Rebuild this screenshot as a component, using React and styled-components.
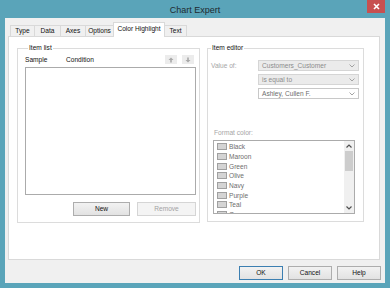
import React from 'react'
import styled, { createGlobalStyle, css } from 'styled-components'

const GlobalStyle = createGlobalStyle`
html, body {
  margin: 0;
  padding: 0;
}
body {
  font-family: "Liberation Sans", Arial, sans-serif;
  width: 390px;
  height: 288px;
  overflow: hidden;
}
* { box-sizing: border-box; }
`

const Window = styled.div`
width: 390px;
height: 288px;
background: #5aa4b9;
display: flex;
flex-direction: column;
`
const TitleBar = styled.div`
height: 18px;
display: grid;
grid-template-columns: 1fr auto 1fr;
align-items: start;
`
const Title = styled.div`
grid-column: 2;
font-size: 9px;
line-height: 16px;
padding-top: 2px;
color: #1f2a30;
`
const CloseBtn = styled.div`
grid-column: 3;
justify-self: end;
margin-right: 5px;
width: 18px;
height: 13px;
background: #c75050;
display: flex;
align-items: center;
justify-content: center;
`
const Client = styled.div`
flex: 1;
margin: 0 5px 5px;
background: #f0f0f0;
display: flex;
flex-direction: column;
padding: 4px 4px 0 3px;
`
const Tabs = styled.div`
display: flex;
align-items: flex-end;
height: 14px;
padding-left: 2px;
position: relative;
z-index: 1;
`
const Tab = styled.div`
width: ${p => p.w}px;
height: 11px;
margin-right: -1px;
border: 1px solid #d9d9d9;
border-bottom: none;
background: #f0f0f0;
font-size: 6.6px;
line-height: 10px;
text-align: center;
white-space: nowrap;
color: #111;
${p => p.active && css`
  height: 15px;
  margin-bottom: -1px;
  background: #fff;
  line-height: 12px;
`}
`
const Panel = styled.div`
height: 224px;
margin-right: 1px;
background: #fff;
border: 1px solid #d9d9d9;
display: flex;
gap: 7px;
padding: 7px 0 0 8px;
`
const Group = styled.fieldset`
margin: 0;
width: ${p => p.w}px;
height: ${p => p.h}px;
border: 1px solid #dcdcdc;
padding: ${p => p.pad};
min-width: 0;
display: flex;
flex-direction: column;
`
const Legend = styled.legend`
font-size: 6.6px;
line-height: 8px;
padding: 0 1px;
margin-left: 3px;
color: #111;
`
const HeaderRow = styled.div`
display: flex;
align-items: center;
height: 11px;
margin-top: 2px;
font-size: 6.6px;
color: #111;
`
const Col = styled.div`
width: ${p => p.w ? p.w + 'px' : 'auto'};
flex: ${p => p.w ? 'none' : 1};
`
const ArrowBtn = styled.div`
width: 12px;
height: 9px;
background: #ececec;
margin-left: 5px;
display: flex;
align-items: center;
justify-content: center;
`
const ListBox = styled.div`
height: ${p => p.h}px;
margin: ${p => p.m};
border: 1px solid #ababab;
background: #fff;
display: flex;
`
const ButtonRow = styled.div`
display: flex;
justify-content: flex-end;
gap: ${p => p.gap}px;
margin-top: ${p => p.mt}px;
margin-right: ${p => p.mr}px;
`
const Button = styled.div`
width: ${p => p.w}px;
height: 14px;
border: 1px solid #adadad;
background: linear-gradient(#f2f2f2, #e2e2e2);
font-size: 6.6px;
line-height: 12px;
text-align: center;
color: #111;
${p => p.disabled && css`
  border-color: #d5d5d5;
  background: #f4f4f4;
  color: #a3a3a3;
`}
${p => p.primary && css`
  border-color: #3c7fb1;
`}
`
const FieldRow = styled.div`
display: grid;
grid-template-columns: 47px 1fr;
margin-top: 8px;
padding-left: 3px;
margin-right: 4px;
`
const Label = styled.div`
font-size: 6.6px;
color: #a6a6a6;
line-height: 11px;
padding-top: ${p => p.pt || 0}px;
padding-left: ${p => p.pl || 0}px;
`
const Combos = styled.div`
display: flex;
flex-direction: column;
gap: 3px;
`
const Combo = styled.div`
height: 11px;
border: 1px solid #d5d5d5;
background: #ebebeb;
color: #8c8c8c;
font-size: 6.6px;
line-height: 9px;
padding-left: 3px;
display: flex;
align-items: center;
justify-content: space-between;
${p => p.enabled && css`
  background: #fff;
  border-color: #c8c8c8;
  color: #6e6e6e;
`}
`
const Chevron = styled.svg`
margin-right: 3px;
flex: none;
`
const Items = styled.div`
flex: 1;
overflow: hidden;
padding: 1px 0 0 3px;
`
const Item = styled.div`
height: 9.7px;
display: flex;
align-items: center;
gap: 2px;
font-size: 6.6px;
color: #6e6e6e;
`
const Swatch = styled.div`
width: 10px;
height: 7px;
background: #d4d4d4;
border: 1px solid #a0a0a0;
flex: none;
`
const ScrollBar = styled.div`
width: 10px;
background: #f0f0f0;
display: flex;
flex-direction: column;
align-items: center;
`
const ScrollArrow = styled.div`
height: 10px;
display: flex;
align-items: center;
justify-content: center;
`
const Thumb = styled.div`
width: 8px;
height: 20px;
background: #cdcdcd;
`
const Spacer = styled.div`
flex: 1;
`
const Footer = styled.div`
display: flex;
justify-content: flex-end;
gap: 5px;
padding-top: 6px;
`

const Down = () => (
  <Chevron width="6" height="4" viewBox="0 0 6 4">
    <polyline points="0.5,0.5 3,3 5.5,0.5" fill="none" stroke="#9a9a9a" strokeWidth="0.9" />
  </Chevron>
)

const MoveArrow = ({ up }) => (
  <svg width="6" height="6" viewBox="0 0 6 6">
    <g transform={up ? '' : 'rotate(180 3 3)'}>
      <polygon points="3,0.5 5.5,3 0.5,3" fill="#a8a8a8" />
      <rect x="2.2" y="3" width="1.6" height="2.5" fill="#a8a8a8" />
    </g>
  </svg>
)

const ScrollChevron = ({ up }) => (
  <svg width="6" height="4" viewBox="0 0 6 4">
    <polyline points={up ? '0.5,3.5 3,1 5.5,3.5' : '0.5,0.5 3,3 5.5,0.5'} fill="none" stroke="#505050" strokeWidth="1.2" />
  </svg>
)

const colors = ['Black', 'Maroon', 'Green', 'Olive', 'Navy', 'Purple', 'Teal', 'Gray']

const App = () => {
  return (
    <>
      <GlobalStyle />
      <Window>
        <TitleBar>
          <Title>Chart Expert</Title>
          <CloseBtn>
            <svg width="7" height="7" viewBox="0 0 7 7">
              <path d="M1 1 L6 6 M6 1 L1 6" stroke="#fff" strokeWidth="1.6" />
            </svg>
          </CloseBtn>
        </TitleBar>
        <Client>
          <Tabs>
            <Tab w={25}>Type</Tab>
            <Tab w={27}>Data</Tab>
            <Tab w={26}>Axes</Tab>
            <Tab w={29}>Options</Tab>
            <Tab w={52} active>Color Highlight</Tab>
            <Tab w={23}>Text</Tab>
          </Tabs>
          <Panel>
            <Group w={183} h={179} pad="0 3px 0 7px">
              <Legend>Item list</Legend>
              <HeaderRow>
                <Col w={41}>Sample</Col>
                <Col>Condition</Col>
                <ArrowBtn><MoveArrow up /></ArrowBtn>
                <ArrowBtn><MoveArrow /></ArrowBtn>
                <Col w={2} />
              </HeaderRow>
              <ListBox h={128} m="2px 0 0 0" />
              <ButtonRow gap={7} mt={7} mr={0}>
                <Button w={57}>New</Button>
                <Button w={59} disabled>Remove</Button>
              </ButtonRow>
            </Group>
            <Group w={157} h={178} pad="0 0 0 0">
              <Legend>Item editor</Legend>
              <FieldRow>
                <Label>Value of:</Label>
                <Combos>
                  <Combo>Customers_Customer<Down /></Combo>
                  <Combo>is equal to<Down /></Combo>
                  <Combo enabled>Ashley, Cullen F.<Down /></Combo>
                </Combos>
              </FieldRow>
              <Label pt={28} pl={6}>Format color:</Label>
              <ListBox h={74} m="2px 8px 0 5px">
                <Items>
                  {colors.map(c => (
                    <Item key={c}><Swatch />{c}</Item>
                  ))}
                </Items>
                <ScrollBar>
                  <ScrollArrow><ScrollChevron up /></ScrollArrow>
                  <Thumb />
                  <Spacer />
                  <ScrollArrow><ScrollChevron /></ScrollArrow>
                </ScrollBar>
              </ListBox>
            </Group>
          </Panel>
          <Footer>
            <Button w={44} primary>OK</Button>
            <Button w={44}>Cancel</Button>
            <Button w={44}>Help</Button>
          </Footer>
        </Client>
      </Window>
    </>
  )
}

export default App
